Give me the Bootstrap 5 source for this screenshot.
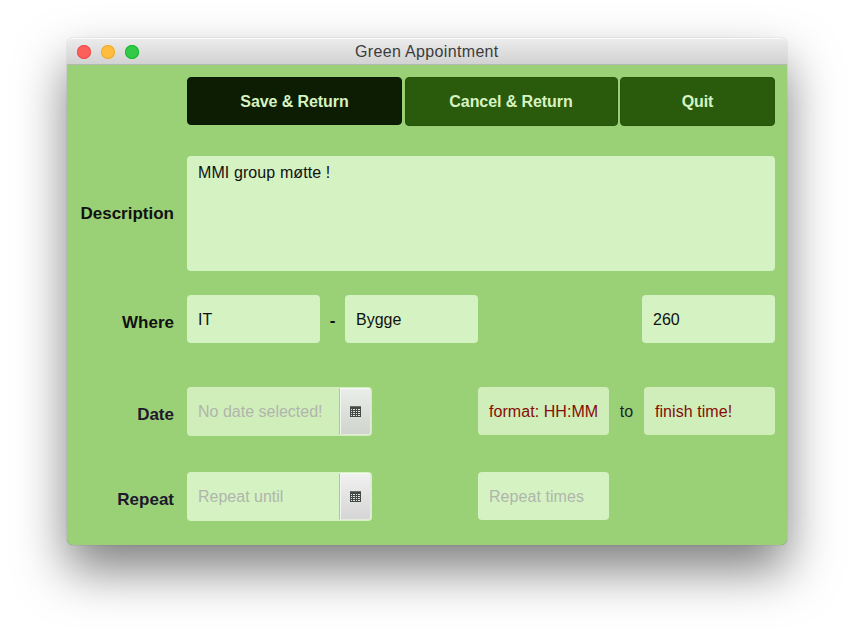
<!DOCTYPE html>
<html lang="en">
<head>
<meta charset="utf-8">
<title>Green Appointment</title>
<link href="https://cdn.jsdelivr.net/npm/bootstrap@5.3.0/dist/css/bootstrap.min.css" rel="stylesheet">
<style>
body{background:#fff;font-family:"Liberation Sans",Arial,sans-serif;font-size:16px;line-height:20px;color:#111;height:641px;overflow:hidden}
.app-window{width:720px;height:507px;margin:38px 0 0 67px;border-radius:6px;background:#9ad177;
  box-shadow:0 0 1px rgba(0,0,0,.45),0 25px 50px rgba(0,0,0,.5)}
.titlebar{height:27px;background:linear-gradient(#ececec,#d2d2d2);border-bottom:1px solid #b3b7b0;border-radius:6px 6px 0 0;box-shadow:inset 0 1px #fbfbfb;color:#3c3c3c;letter-spacing:.34px;padding:2px 0 0 10px}
.lights{gap:10px;margin-top:-1px}
.light{width:14px;height:14px;border-radius:50%}
.light-close{background:#fd5f5b;box-shadow:inset 0 0 0 1px #ed504c}
.light-min{background:#febd3e;box-shadow:inset 0 0 0 1px #eaab33}
.light-zoom{background:#34c94a;box-shadow:inset 0 0 0 1px #16bb2c}
.titletext{margin-left:216px}
.form-area{padding:12px 12px 0 12px}
.lbl{width:95px;margin-right:13px;flex-shrink:0;font-size:17px;font-weight:700;text-align:right;white-space:nowrap}
.lbl-dark{color:#20182c}
.btn-g{--bs-btn-color:#d6f3c1;--bs-btn-bg:#2a5a0c;--bs-btn-border-color:#265209;height:49px;border-radius:4px;padding:0;line-height:20px;font-weight:700;letter-spacing:-.08px}
.btn-save{--bs-btn-bg:#0c1d03;--bs-btn-border-color:#0a1802;width:215px;height:48px;padding-top:1px}
.btn-cancel{width:213px}
.btn-quit{width:155px}
.buttons{gap:2.5px;margin-left:108px;height:49px}
.field{background:#d5f2c2;border:0;border-radius:4px;height:48px;padding:2px 11px 0;font-size:16px;line-height:20px;color:#111;white-space:nowrap}
.field-dim{background:#d0eeba}
.field-area{height:115px;padding-top:7px;letter-spacing:.1px}
.ghost{color:#b0b5ad}
.warn{color:#850c05}
.w-place{width:133px}
.w-time{width:131px;padding-top:1px;letter-spacing:.06px}
.picker{width:185px;height:49px;padding:0 0 0 11px}
.cal-btn{width:32px;height:47px;background:linear-gradient(#eaeeea,#cfd4cc);border:1px solid #e3ebde;border-left:1px solid #b5bdb1;border-top-color:#f5f8f3;border-radius:0 3px 3px 0;box-shadow:inset 1px 0 #f4f6f3;margin-right:1px}
.cal-plain{background:linear-gradient(#f1f1f1,#d5d5d5)}
.row-desc{margin-top:30px;height:115px}
.row-where{margin-top:24px;height:48px}
.row-date{margin-top:44px;height:49px}
.row-repeat{margin-top:36px;height:49px}
.low{padding-top:7px}
.dash{width:25px;text-align:center;font-size:17px;font-weight:700;padding-top:3px}
.to{width:35px;text-align:center;color:#20222c}
.repeat-times{margin-left:auto;margin-right:166px;padding-top:2px}
</style>
<script src="https://cdn.jsdelivr.net/npm/bootstrap@5.3.0/dist/js/bootstrap.bundle.min.js"></script>
</head>
<body>
<svg class="d-none"><symbol id="cal" viewBox="0 0 11 11">
<path fill="#454945" d="M0 0h11v11H0z"/><path fill="#6b6f6b" d="M0 0h11v1H0z"/>
<path fill="#e0e4df" d="M1 3h1v1H1zM3 3h2v1H3zM6 3h1v1H6zM8 3h2v1H8zM1 5h1v1H1zM3 5h2v1H3zM6 5h1v1H6zM8 5h2v1H8zM1 7h1v1H1zM3 7h2v1H3zM6 7h1v1H6zM8 7h2v1H8zM1 9h1v1H1zM3 9h2v1H3zM6 9h1v1H6zM8 9h2v1H8z"/></symbol></svg>
<main class="app-window">
  <header class="titlebar d-flex align-items-center">
    <div class="lights d-flex"><span class="light light-close"></span><span class="light light-min"></span><span class="light light-zoom"></span></div>
    <span class="titletext">Green Appointment</span>
  </header>
  <div class="form-area">
    <div class="buttons d-flex align-items-start">
      <button class="btn btn-g btn-save">Save &amp; Return</button>
      <button class="btn btn-g btn-cancel">Cancel &amp; Return</button>
      <button class="btn btn-g btn-quit">Quit</button>
    </div>
    <div class="row-desc d-flex align-items-center">
      <div class="lbl">Description</div>
      <div class="form-control field field-area">MMI group møtte !</div>
    </div>
    <div class="row-where d-flex align-items-center">
      <div class="lbl low">Where</div>
      <div class="field w-place d-flex align-items-center">IT</div>
      <div class="dash">-</div>
      <div class="field w-place d-flex align-items-center">Bygge</div>
      <div class="field w-place d-flex align-items-center ms-auto">260</div>
    </div>
    <div class="row-date d-flex align-items-start">
      <div class="lbl lbl-dark align-self-center low">Date</div>
      <div class="field field-dim picker d-flex align-items-center"><span class="ghost">No date selected!</span>
        <span class="cal-btn ms-auto d-flex align-items-center justify-content-center"><svg width="11" height="11"><use href="#cal"/></svg></span></div>
      <div class="field field-dim w-time warn d-flex align-items-center ms-auto">format: HH:MM</div>
      <div class="to align-self-center">to</div>
      <div class="field field-dim w-time warn d-flex align-items-center">finish time!</div>
    </div>
    <div class="row-repeat d-flex align-items-start">
      <div class="lbl lbl-dark align-self-center low">Repeat</div>
      <div class="field picker d-flex align-items-center"><span class="ghost">Repeat until</span>
        <span class="cal-btn cal-plain ms-auto d-flex align-items-center justify-content-center"><svg width="11" height="11"><use href="#cal"/></svg></span></div>
      <div class="field w-time ghost d-flex align-items-center repeat-times">Repeat times</div>
    </div>
  </div>
</main>
</body>
</html>
